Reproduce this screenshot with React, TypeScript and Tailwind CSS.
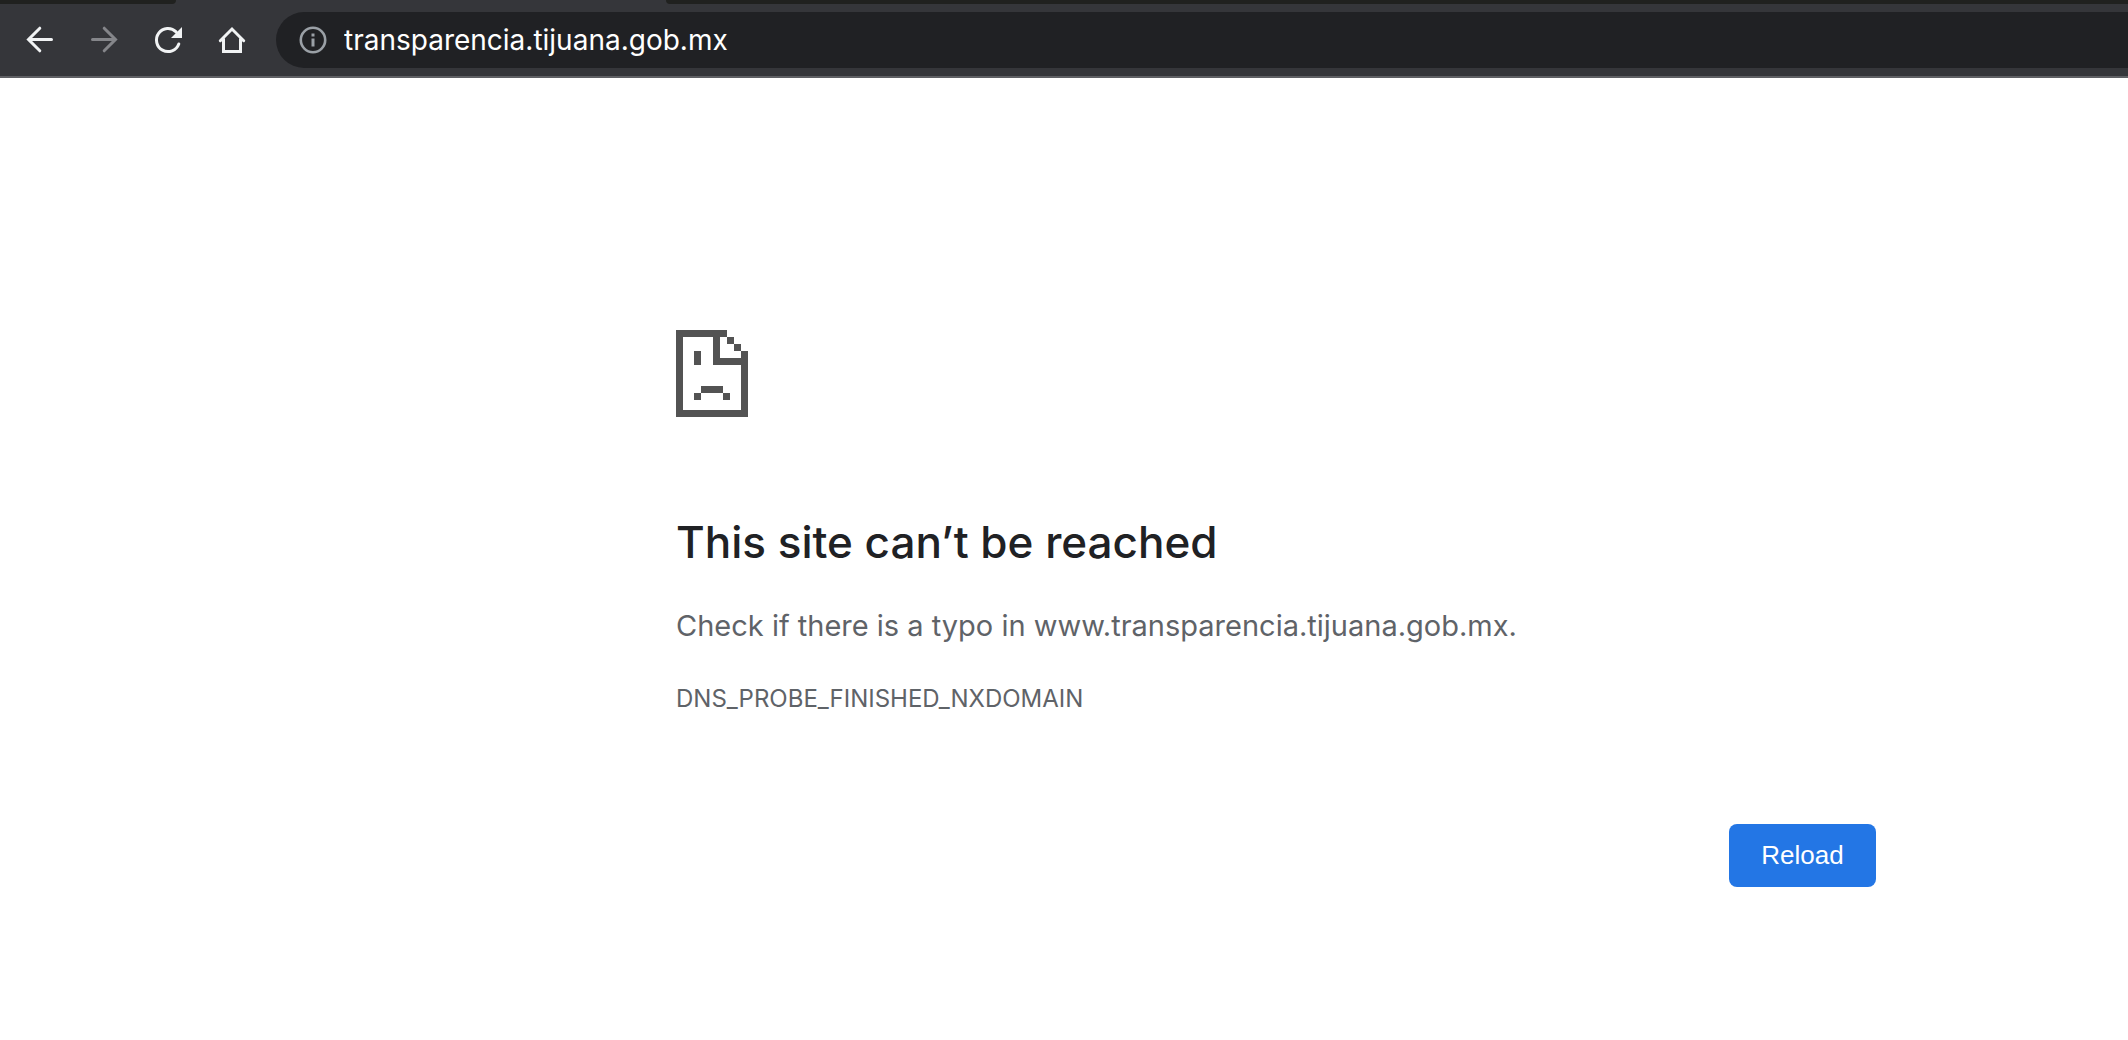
import type { ReactNode } from "react";

const HOST = "transparencia.tijuana.gob.mx";

function NavButton({ label, disabled, children }: { label: string; disabled?: boolean; children: ReactNode }) {
  return (
    <button
      type="button"
      aria-label={label}
      disabled={disabled}
      className="flex size-8 shrink-0 items-center justify-center text-[#f1f3f4] disabled:text-[#85868a]"
    >
      <svg viewBox="0 0 32 32" className="size-8" fill="none" stroke="currentColor" strokeWidth={3} strokeLinecap="round">
        {children}
      </svg>
    </button>
  );
}

// Bottom edges of the two background tabs, with the active one open between them.
function TabStrip() {
  return (
    <div className="flex h-1 justify-between bg-[#35363a]">
      <div className="w-[176px] rounded-br-xl bg-[#20211f]" />
      <div className="ml-[490px] flex-1 rounded-bl-xl bg-[#20211f]" />
    </div>
  );
}

function Toolbar() {
  return (
    <header className="border-b-2 border-[#5f6064] bg-[#35363a]">
      <TabStrip />
      <nav className="flex h-[72px] items-center gap-8 pl-6">
        <NavButton label="Back">
          <path d="M27.5 15.500H4.800M15.800 4.200 4.500 15.500l11.300 11.300" />
        </NavButton>
        <NavButton label="Forward" disabled>
          <path d="M4.500 15.500h22.700M16.200 4.200l11.300 11.300-11.300 11.300" />
        </NavButton>
        <NavButton label="Reload this page">
          <path d="M26.800 20A11.500 11.500 0 1 1 24.100 7.900" />
          <path d="M30 3v11H19z" fill="currentColor" stroke="none" />
        </NavButton>
        <NavButton label="Home">
          <path d="M4.300 16.700 16 5l11.700 11.700M7.500 15v12.500h17V15" />
        </NavButton>
        <div className="-ml-1 flex h-14 flex-1 items-center gap-[17px] rounded-l-full bg-[#202124] pl-[23px]">
          <svg viewBox="0 0 28 28" className="size-7 shrink-0" fill="none" stroke="#9aa0a6" strokeWidth={2.600}>
            <circle cx="14" cy="14" r="12.200" />
            <path d="M14 12.500v8M14 7.500v3" strokeWidth={3} />
          </svg>
          <input
            type="text"
            aria-label="Address and search bar"
            defaultValue={HOST}
            spellCheck={false}
            className="h-10 min-w-0 flex-1 bg-transparent text-[28px] text-white outline-none"
          />
        </div>
      </nav>
    </header>
  );
}

function SadPageIcon() {
  return (
    <svg viewBox="0 0 72 87" className="h-[87px] w-[72px]" fill="#535353" shapeRendering="crispEdges" aria-hidden="true">
      <path d="M0 0h51v7H44v21h21v-7h7v66H0zM7 7v73h58V35H37V7z" fillRule="evenodd" />
      <path d="M51 7h7v7h-7zM58 14h7v7h-7z" />
      <path d="M18 21h7v14h-7zM25 56h22v7H25zM18 63h7v7h-7zM47 63h7v7h-7z" />
    </svg>
  );
}

export default function App() {
  return (
    <div className="min-h-screen bg-white font-['Inter',sans-serif]">
      <Toolbar />
      <main className="pt-[252px] pr-[252px] pl-[676px] text-[#5f6368]">
        <SadPageIcon />
        <h1 className="mt-[95px] text-[44px] leading-[60px] font-medium text-[#202124]">
          This site can’t be reached
        </h1>
        <p className="mt-[30px] text-[29px] leading-[48px]">Check if there is a typo in www.{HOST}.</p>
        <p className="mt-[31px] text-[24px] leading-[36px]">DNS_PROBE_FINISHED_NXDOMAIN</p>
        <div className="mt-[107px] flex justify-end">
          <button
            type="button"
            className="h-[63px] w-[147px] rounded-lg bg-[#2376e5] font-['Liberation_Sans',sans-serif] text-[26px] text-white"
          >
            Reload
          </button>
        </div>
      </main>
    </div>
  );
}
